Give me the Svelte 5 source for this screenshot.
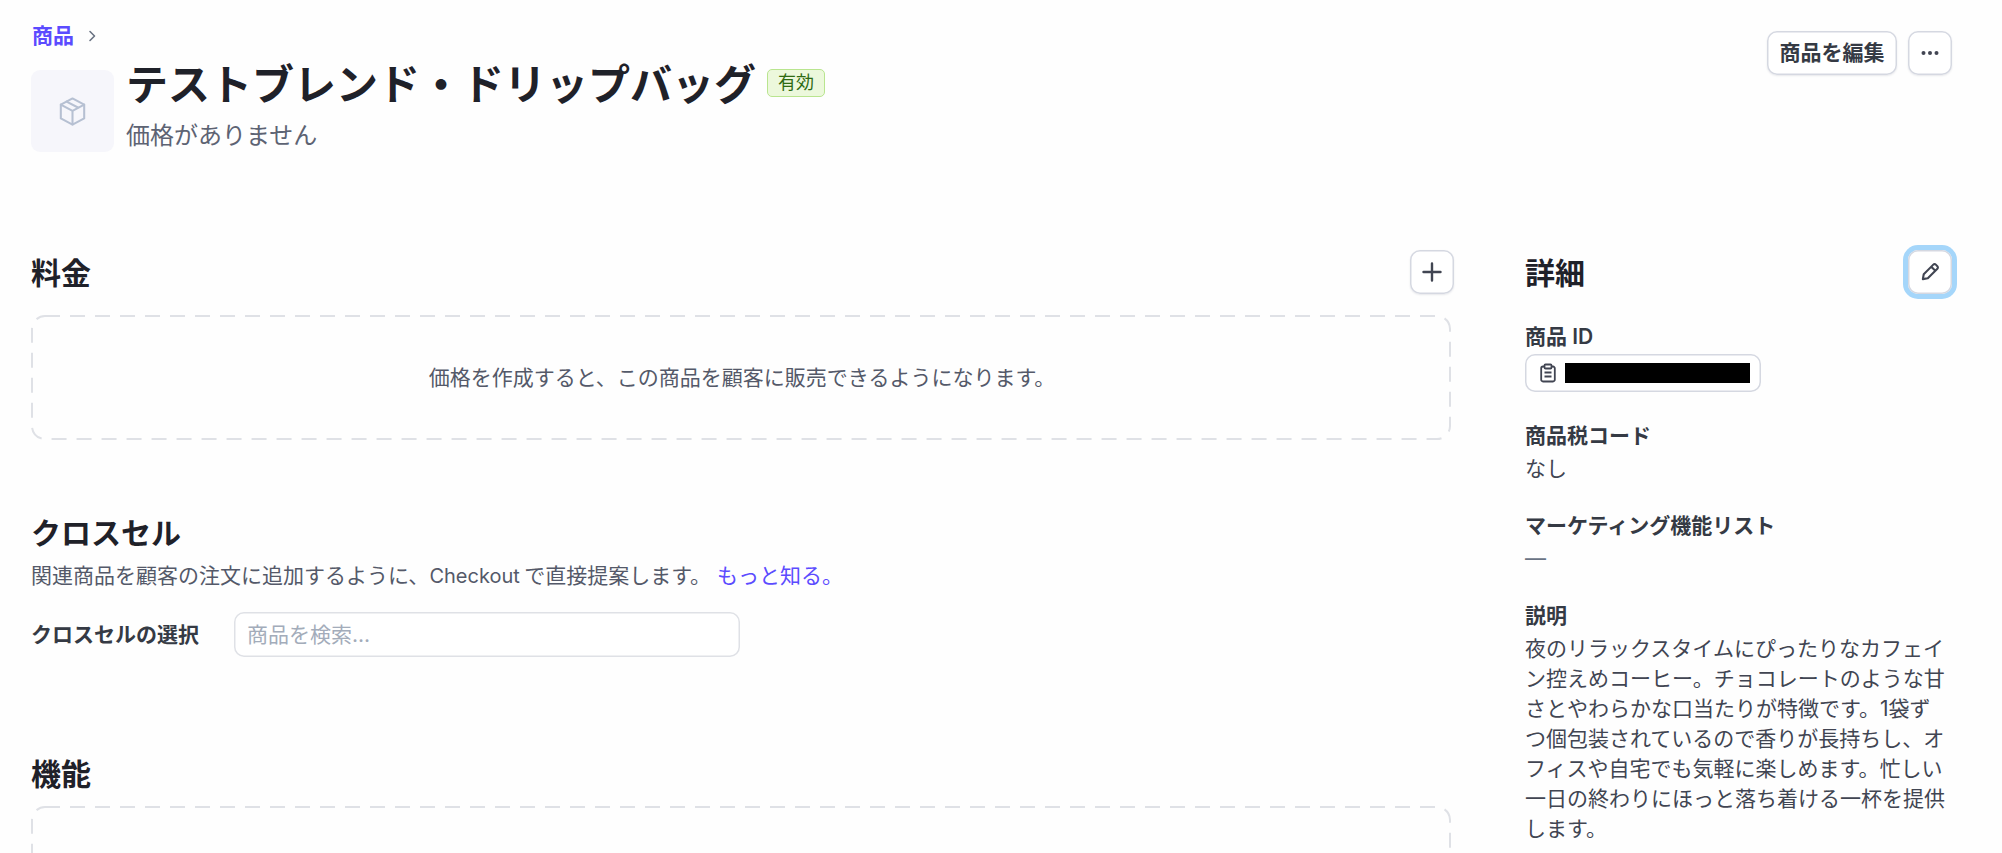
<script>
  const description =
    '夜のリラックスタイムにぴったりなカフェイン控えめコーヒー。チョコレートのような甘さとやわらかな口当たりが特徴です。1袋ずつ個包装されているので香りが長持ちし、オフィスや自宅でも気軽に楽しめます。忙しい一日の終わりにほっと落ち着ける一杯を提供します。';
</script>

{#snippet dashed()}
  <svg class="dash" aria-hidden="true">
    <rect x="1" y="1" width="calc(100% - 2px)" height="calc(100% - 2px)" rx="13" ry="13" />
  </svg>
{/snippet}

<div class="page">
  <header class="top">
    <div class="top-left">
      <nav class="crumb">
        <a href="#p">商品</a>
        <svg width="14" height="14" viewBox="0 0 14 14" fill="none" stroke="#6a7383" stroke-width="1.6" stroke-linecap="round" stroke-linejoin="round"><path d="M5 2.500 9.500 7 5 11.500" /></svg>
      </nav>
      <div class="product">
        <div class="thumb">
          <svg width="33" height="33" viewBox="0 0 24 24" fill="none" stroke="#b6c0d2" stroke-width="1.500" stroke-linejoin="round" stroke-linecap="round">
            <path d="M12 2.500 20.500 7v10L12 21.500 3.500 17V7Z" />
            <path d="M3.500 7 12 11.500 20.500 7M12 11.500v10M7.700 4.800l8.600 4.500" />
          </svg>
        </div>
        <div class="titles">
          <div class="title-row">
            <h1>テストブレンド・ドリップバッグ</h1>
            <span class="badge">有効</span>
          </div>
          <p class="price">価格がありません</p>
        </div>
      </div>
    </div>
    <div class="actions">
      <button class="btn">商品を編集</button>
      <button class="btn square" aria-label="その他">
        <svg width="18" height="18" viewBox="0 0 18 18" fill="#414552"><circle cx="2.500" cy="9" r="2" /><circle cx="9" cy="9" r="2" /><circle cx="15.500" cy="9" r="2" /></svg>
      </button>
    </div>
  </header>

  <div class="columns">
    <main class="main">
      <section>
        <div class="head">
          <h2>料金</h2>
          <button class="btn square" aria-label="追加">
            <svg width="20" height="20" viewBox="0 0 20 20" fill="none" stroke="#414552" stroke-width="2.400" stroke-linecap="round"><path d="M10 1.500v17M1.500 10h17" /></svg>
          </button>
        </div>
        <div class="empty">
          {@render dashed()}
          価格を作成すると、この商品を顧客に販売できるようになります。
        </div>
      </section>

      <section class="cross">
        <h2>クロスセル</h2>
        <p class="desc">関連商品を顧客の注文に追加するように、<span class="latin">Checkout</span> で直接提案します。 <a href="#m">もっと知る。</a></p>
        <div class="field">
          <span class="field-label">クロスセルの選択</span>
          <div class="input">商品を検索...</div>
        </div>
      </section>

      <section class="features">
        <h2>機能</h2>
        <div class="empty tall">
          {@render dashed()}
        </div>
      </section>
    </main>

    <aside class="side">
      <div class="head">
        <h2>詳細</h2>
        <button class="btn square focus" aria-label="編集">
          <svg width="22" height="22" viewBox="0 0 20 20" fill="none" stroke="#414552" stroke-width="1.900" stroke-linejoin="round" stroke-linecap="round"><path d="M3.500 16.500 4.300 12 13 3.300a1.600 1.600 0 0 1 2.300 0l1.400 1.400a1.600 1.600 0 0 1 0 2.300L8 15.700ZM11.200 5.200l3.600 3.600" /></svg>
        </button>
      </div>
      <dl>
        <div class="item id">
          <dt>商品 ID</dt>
          <dd class="chip">
            <svg width="18" height="20" viewBox="0 0 18 20" fill="none" stroke="#414552" stroke-width="1.800" stroke-linejoin="round"><path d="M5.500 3.500H4A1.800 1.800 0 0 0 2.200 5.300v11.400A1.800 1.800 0 0 0 4 18.500h10a1.800 1.800 0 0 0 1.800-1.800V5.300A1.800 1.800 0 0 0 14 3.500h-1.500" /><rect x="5.500" y="1.500" width="7" height="4" rx="1" /><path d="M5.500 9.500h7M5.500 13.500h7" /></svg>
            <span class="redact"></span>
          </dd>
        </div>
        <div class="item">
          <dt>商品税コード</dt>
          <dd>なし</dd>
        </div>
        <div class="item">
          <dt>マーケティング機能リスト</dt>
          <dd class="none">—</dd>
        </div>
        <div class="item">
          <dt>説明</dt>
          <dd class="body">{description}</dd>
        </div>
      </dl>
    </aside>
  </div>
</div>

<style>
  :global(html), :global(body) {
    margin: 0;
    background: #fefefe;
    overflow: hidden;
  }
  .page {
    box-sizing: border-box;
    width: 2002px;
    height: 853px;
    overflow: hidden;
    padding: 21px 50px 0 31px;
    font-family: Inter, "Noto Sans CJK JP", sans-serif;
    font-size: 21px;
    line-height: 30px;
    color: #414552;
  }
  h1, h2, p, dl, dd, dt { margin: 0; }
  a { color: #5b4bff; text-decoration: none; }

  .top {
    display: flex;
    justify-content: space-between;
    align-items: flex-start;
    height: 229px;
  }
  .crumb {
    display: flex;
    align-items: center;
    gap: 11px;
    height: 30px;
    padding-left: 1px;
  }
  .crumb a { font-weight: 600; }
  .product {
    display: flex;
    gap: 12px;
    margin-top: 2px;
  }
  .thumb {
    width: 83px;
    height: 82px;
    margin-top: 17px;
    border-radius: 9px;
    background: #f6f6fb;
    display: flex;
    align-items: center;
    justify-content: center;
  }
  .title-row {
    display: flex;
    align-items: center;
    gap: 11px;
    height: 64px;
  }
  h1 {
    font-size: 42px;
    line-height: 64px;
    font-weight: 700;
    color: #1f2129;
  }
  .badge {
    box-sizing: border-box;
    height: 28px;
    padding: 0 10px;
    margin-top: -4px;
    border: 1px solid #b9e58f;
    border-radius: 5px;
    background: #ecf8dc;
    color: #2f6a12;
    font-size: 18px;
    line-height: 26px;
  }
  .price {
    font-size: 24px;
    line-height: 36px;
    margin-top: 1px;
    color: #5d6373;
  }
  .actions {
    display: flex;
    gap: 11px;
    margin-top: 10px;
  }
  .btn {
    box-sizing: border-box;
    height: 44px;
    padding: 0 12.500px;
    border: 0;
    border-radius: 10px;
    background: #fff;
    box-shadow: inset 0 0 0 1.500px #d5d8e1, 0 1px 2px rgba(30, 40, 70, .1);
    color: #353a44;
    font: 600 21px/44px Inter, "Noto Sans CJK JP", sans-serif;
    display: flex;
    align-items: center;
    justify-content: center;
  }
  .btn.square {
    width: 44px;
    padding: 0;
  }
  .btn.focus {
    box-shadow: inset 0 0 0 1.500px #d5d8e1, 0 0 0 5px #a5d6fa;
  }

  .columns {
    display: grid;
    grid-template-columns: 1423px 427px;
    column-gap: 71px;
  }
  .head {
    display: flex;
    justify-content: space-between;
    align-items: center;
    height: 44px;
    margin-bottom: 21px;
  }
  .head h2 { margin-top: 2px; }
  h2 {
    font-size: 30px;
    line-height: 40px;
    font-weight: 700;
    color: #1f2129;
  }
  .empty {
    position: relative;
    box-sizing: border-box;
    width: 1420px;
    height: 125px;
    padding-left: 2px;
    display: flex;
    align-items: center;
    justify-content: center;
    color: #545969;
  }
  .empty.tall { height: 200px; }
  .dash {
    position: absolute;
    inset: 0;
    width: 100%;
    height: 100%;
  }
  .dash rect {
    fill: none;
    stroke: #dfe1e6;
    stroke-width: 2;
    stroke-dasharray: 15 10;
  }
  .cross { margin-top: 73px; }
  .desc {
    margin-top: 8px;
    color: #545969;
    white-space: nowrap;
  }
  .latin {
    font-size: 20px;
    margin-right: -1.500px;
  }
  .field {
    display: flex;
    align-items: center;
    gap: 35px;
    margin-top: 21px;
  }
  .field-label {
    font-weight: 600;
    color: #353a44;
    width: 168px;
    flex-shrink: 0;
  }
  .input {
    box-sizing: border-box;
    width: 506px;
    height: 45px;
    padding: 0 13px;
    border-radius: 10px;
    background: #fff;
    box-shadow: inset 0 0 0 1.500px #dfe1e6;
    line-height: 45px;
    color: #a3acba;
  }
  .features { margin-top: 97px; }
  .features .empty { margin-top: 12px; }

  .side .head { margin-bottom: 28px; }
  .item { margin-bottom: 27px; }
  .item.id { margin-bottom: 29px; }
  dt {
    font-weight: 600;
    color: #353a44;
    line-height: 30px;
    margin-bottom: 3px;
  }
  dd { line-height: 30px; color: #414552; }
  .body { max-width: 424px; }
  .item.id dt { margin-bottom: 2px; }
  .none { color: #6a7383; }
  .chip {
    box-sizing: border-box;
    width: 236px;
    height: 38px;
    display: flex;
    align-items: center;
    gap: 8px;
    padding-left: 14px;
    border-radius: 10px;
    background: #fff;
    box-shadow: inset 0 0 0 1.500px #d5d8e1;
  }
  .redact {
    width: 185px;
    height: 20px;
    background: #000;
  }
</style>
